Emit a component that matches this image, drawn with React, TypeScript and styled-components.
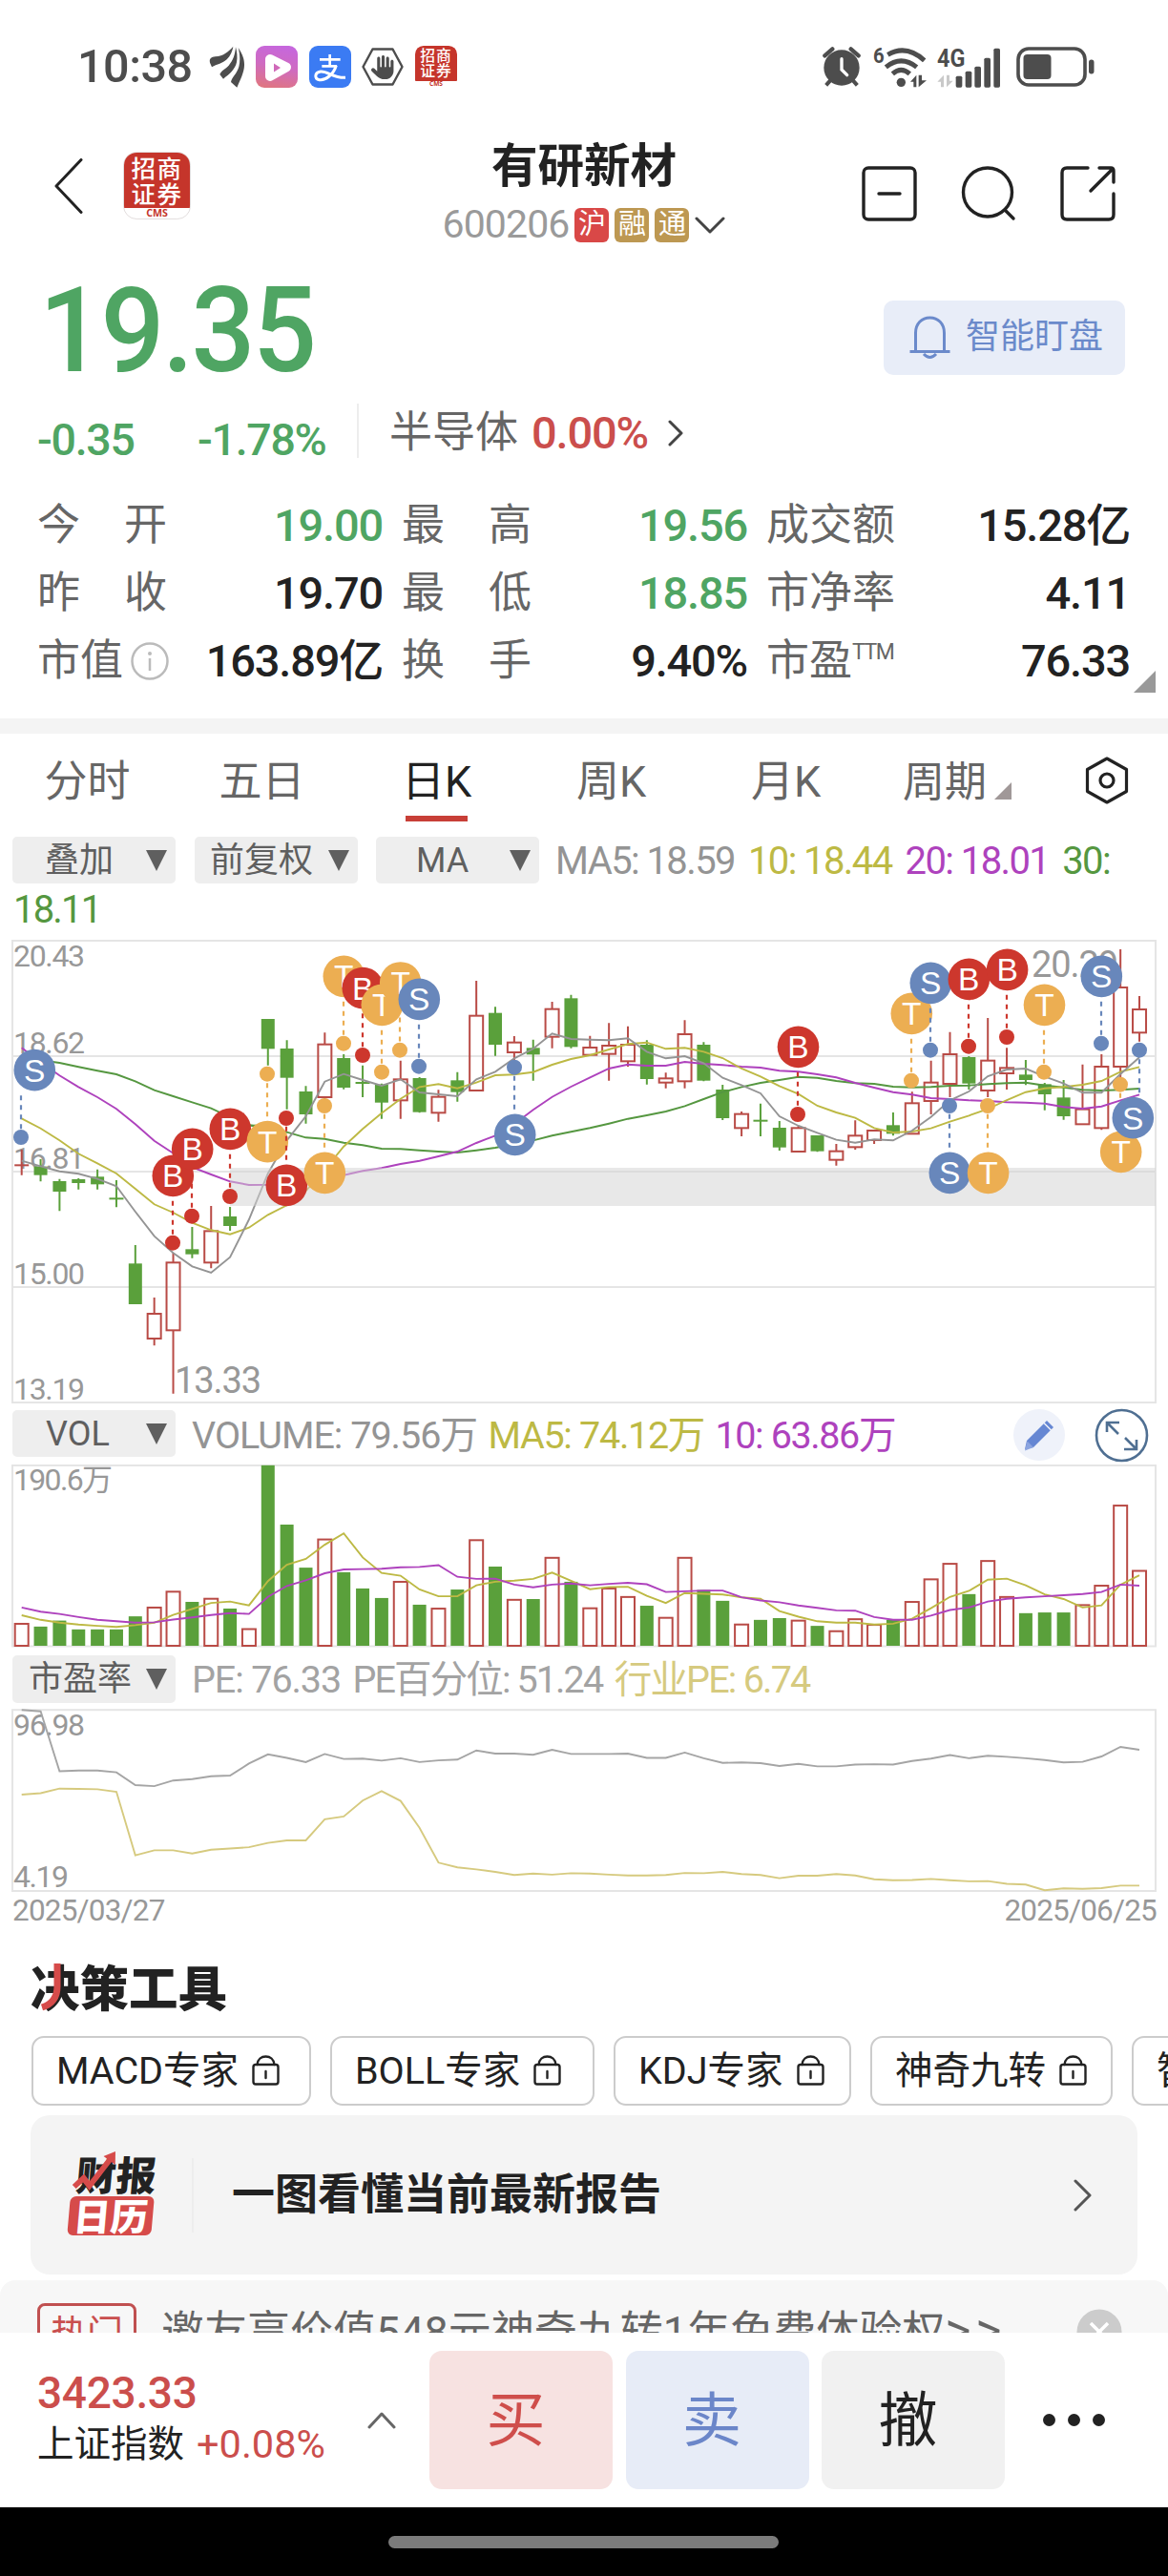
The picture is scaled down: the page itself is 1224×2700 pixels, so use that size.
import React from "react";
import styled, { createGlobalStyle } from "styled-components";
import { FaHand } from "react-icons/fa6";

const GREEN = "#4fa563";
const RED = "#cb4e4c";
const INK = "#222222";
const GRAY = "#666666";
const UP = "#b94b46";
const DOWN = "#5aa03b";
const MA_GRAY = "#949494";
const MA_YELLOW = "#bdb944";
const MA_PURPLE = "#ae42bd";
const MA_GREEN = "#559740";

const Global = createGlobalStyle`
  * { box-sizing: border-box; }
  html, body { margin: 0; padding: 0; background: #fff; }
  body { font-family: Roboto, "Noto Sans CJK SC", sans-serif; color: ${INK}; }
  svg { display: block; flex: none; }
`;

const Page = styled.div`
  width: 1224px;
  height: 2700px;
  overflow: hidden;
  background: #fff;
  display: flex;
  flex-direction: column;
  white-space: nowrap;
`;

type TextProps = { $size?: number; $color?: string; $weight?: number; $ls?: number };
const Text = styled.span<TextProps>`
  font-size: ${(p) => p.$size ?? 45}px;
  color: ${(p) => p.$color ?? INK};
  font-weight: ${(p) => p.$weight ?? 400};
  letter-spacing: ${(p) => p.$ls ?? 0}px;
  line-height: 1.1;
`;

/* ---------- status bar ---------- */
const StatusBar = styled.div`
  height: 140px;
  flex: none;
  display: flex;
  align-items: center;
  justify-content: space-between;
  padding: 0 77px 0 81px;
`;
const StatusLeft = styled.div`
  display: flex;
  align-items: center;
  gap: 11.600px;
`;
const Clock = styled(Text)`
  width: 126px;
`;
const StatusRight = styled.div`
  display: flex;
  align-items: center;
`;
const Gap = styled.div<{ $w: number }>`
  width: ${(p) => p.$w}px;
  flex: none;
`;

const AppMark = styled.div<{ $size: number }>`
  width: ${(p) => p.$size}px;
  height: ${(p) => p.$size}px;
  flex: none;
  border-radius: ${(p) => p.$size * 0.2}px;
  background: #fff;
  overflow: hidden;
  display: flex;
  flex-direction: column;
  border: ${(p) => (p.$size > 50 ? "1px solid #e3dede" : "0")};
`;
const MarkTop = styled.div<{ $size: number }>`
  height: 84%;
  background: #c5352b;
  color: #fff;
  font-family: "Noto Sans CJK SC", sans-serif;
  font-weight: 500;
  font-size: ${(p) => p.$size * 0.36}px;
  letter-spacing: ${(p) => p.$size * 0.02}px;
  line-height: 1.04;
  display: flex;
  flex-direction: column;
  align-items: center;
  justify-content: center;
`;
const MarkBottom = styled.div<{ $size: number }>`
  height: 16%;
  display: flex;
  align-items: center;
  justify-content: center;
  color: #c5352b;
  font-family: "Open Sans", sans-serif;
  font-weight: 700;
  font-size: ${(p) => p.$size * 0.15}px;
  line-height: 1;
`;
const BrandLogo = ({ size }: { size: number }) => (
  <AppMark $size={size}>
    <MarkTop $size={size}>
      <span>招商</span>
      <span>证券</span>
    </MarkTop>
    <MarkBottom $size={size}>CMS</MarkBottom>
  </AppMark>
);

const HandBadge = styled.div`
  width: 44px;
  height: 44px;
  display: grid;
  place-items: center;
  color: #4d4d4d;
  > * { grid-area: 1 / 1; }
`;

const WingIcon = () => (
  <svg width="38" height="44" viewBox="0 0 114 132">
    <g fill="#4d4d4d">
      <path d="M76 2C62 18 46 32 20 34C8 35 0 40 3 53L9 67C24 58 44 55 56 43C68 31 74 16 76 2Z" />
      <path d="M84 4C82 28 76 46 62 62C52 73 38 78 34 90L45 104C66 88 82 74 87 52C90 36 88 18 84 4Z" />
      <path d="M92 6C103 22 112 40 111 62C110 86 98 106 88 131L69 114C72 98 88 88 94 66C99 46 97 24 92 6Z" />
    </g>
  </svg>
);
const PlayIcon = () => (
  <svg width="44" height="44" viewBox="0 0 44 44">
    <defs>
      <linearGradient id="play" x1="0.6" y1="0" x2="0.4" y2="1">
        <stop offset="0" stopColor="#c667dd" />
        <stop offset="0.5" stopColor="#cf6bc0" />
        <stop offset="1" stopColor="#df7583" />
      </linearGradient>
    </defs>
    <rect width="44" height="44" rx="9" fill="url(#play)" />
    <path d="M15 14v18l17-9.500z" fill="none" stroke="#fff" strokeWidth="10" strokeLinejoin="round" />
    <path d="M19 18.500v9l7-4.500z" fill="#d069b9" />
  </svg>
);
const PayIcon = () => (
  <svg width="44" height="44" viewBox="0 0 132 132">
    <rect width="132" height="132" rx="27" fill="#3b7bf3" />
    <g fill="none" stroke="#fff" strokeWidth="8">
      <path d="M33 43H98M65 27V64M40 64H87" />
      <path d="M85 62C76 92 50 110 32 107C16 104 16 84 36 81C58 79 76 102 114 100" strokeWidth="9" />
    </g>
  </svg>
);
const AlarmIcon = () => (
  <svg width="40" height="42" viewBox="0 0 120 126">
    <circle cx="60" cy="66" r="56" fill="#4d4d4d" />
    <path d="M7 28L31 7M113 28L89 7" stroke="#4d4d4d" strokeWidth="13" strokeLinecap="round" />
    <path d="M27 103L11 121M93 103L109 121" stroke="#4d4d4d" strokeWidth="12" />
    <path d="M60 38V72L77 89" stroke="#fff" strokeWidth="10" fill="none" strokeLinecap="round" />
  </svg>
);
const WifiIcon = () => (
  <svg width="57" height="44" viewBox="0 0 171 132">
    <text x="0" y="53" fontSize="67" fontWeight="700" fill="#4d4d4d" fontFamily="Roboto" textLength="35" lengthAdjust="spacingAndGlyphs">6</text>
    <g fill="none" stroke="#4d4d4d" strokeWidth="15">
      <path d="M46 28Q104 -6 161 46" />
      <path d="M40 67Q88 28 137 67" />
      <path d="M61 88Q88 64 115 88" />
    </g>
    <circle cx="88" cy="115" r="14" fill="#4d4d4d" />
    <path d="M136 130V92L117 113H127V130ZM143 92V130L168 109H153V92Z" fill="#4d4d4d" />
  </svg>
);
const SignalIcon = () => (
  <svg width="67" height="44" viewBox="0 0 201 132">
    <text x="0" y="66" fontSize="76" fontWeight="700" fill="#4d4d4d" fontFamily="Roboto" textLength="88" lengthAdjust="spacingAndGlyphs">4G</text>
    <path d="M21 130V92L1 113H12V130ZM30 92V130L50 110H39V92Z" fill="#c9c9c9" />
    <g fill="#4d4d4d">
      <rect x="59" y="95" width="20" height="36" rx="5" />
      <rect x="89" y="80" width="20" height="51" rx="5" />
      <rect x="118" y="65" width="20" height="66" rx="5" />
      <rect x="148" y="38" width="20" height="93" rx="5" />
      <rect x="178" y="8" width="20" height="123" rx="5" />
    </g>
  </svg>
);
const BatteryIcon = () => (
  <svg width="82" height="42" viewBox="0 0 82 42">
    <rect x="2" y="2" width="70" height="38" rx="11" fill="none" stroke="#4d4d4d" strokeWidth="3.600" />
    <rect x="7.500" y="8" width="29" height="26" rx="4" fill="#4d4d4d" />
    <rect x="76" y="13.500" width="5.500" height="15" rx="2.700" fill="#4d4d4d" />
  </svg>
);

/* ---------- header ---------- */
const Header = styled.header`
  height: 140px;
  flex: none;
  display: grid;
  grid-template-columns: 400px 424px 400px;
`;
const HeaderSide = styled.div<{ $end?: boolean }>`
  display: flex;
  align-items: flex-start;
  justify-content: ${(p) => (p.$end ? "flex-end" : "flex-start")};
  padding: ${(p) => (p.$end ? "34px 55px 0 0" : "19px 0 0 57px")};
  gap: ${(p) => (p.$end ? 46 : 42)}px;
`;
const BackWrap = styled.div`
  padding-top: 7px;
`;
const TitleBlock = styled.div`
  display: flex;
  flex-direction: column;
  align-items: center;
  padding-top: 7px;
`;
const Title = styled(Text)`
  height: 56px;
  line-height: 56px;
`;
const CodeRow = styled.div`
  display: flex;
  align-items: center;
  height: 36px;
  margin-top: 15px;
  gap: 6px;
`;
const MarketTag = styled.span<{ $bg: string }>`
  width: 36px;
  height: 36px;
  border-radius: 6px;
  background: ${(p) => p.$bg};
  color: #fff;
  font-size: 29px;
  line-height: 35px;
  text-align: center;
`;

/* ---------- price ---------- */
const PriceRow = styled.section`
  height: 134px;
  flex: none;
  display: flex;
  align-items: center;
  justify-content: space-between;
  padding: 0 45px 0 41px;
`;
const Price = styled(Text)`
  line-height: 134px;
  transform: scaleX(0.95);
  transform-origin: left center;
`;
const WatchButton = styled.button`
  width: 253px;
  height: 78px;
  margin-top: 14px;
  border: 0;
  border-radius: 10px;
  background: #e8edf8;
  display: flex;
  align-items: center;
  justify-content: center;
  gap: 16px;
  padding: 0 0 0 4px;
  font-family: inherit;
`;
const ChangeRow = styled.section`
  height: 96px;
  flex: none;
  display: flex;
  align-items: flex-start;
  padding: 9px 0 0 39px;
`;
const Delta = styled(Text)<{ $width: number }>`
  width: ${(p) => p.$width}px;
  line-height: 57px;
  padding-top: 10px;
`;
const Divider = styled.div<{ $h: number }>`
  width: 2px;
  height: ${(p) => p.$h}px;
  background: #ededed;
  flex: none;
`;
const Sector = styled.div`
  display: flex;
  align-items: center;
  height: 61px;
  margin-left: 32px;
`;

const Stats = styled.section`
  position: relative;
  height: 243px;
  flex: none;
  padding: 5px 40px 0 39px;
  display: grid;
  grid-template-columns: 362px 362px 381px;
  column-gap: 20px;
  grid-template-rows: repeat(3, 71px);
`;
const Stat = styled.div`
  display: flex;
  align-items: center;
  justify-content: space-between;
`;
const StatLabel = styled.div<{ $spread?: boolean }>`
  width: 136px;
  display: flex;
  align-items: center;
  justify-content: ${(p) => (p.$spread ? "space-between" : "flex-start")};
  font-size: 45px;
  line-height: 60px;
  color: ${GRAY};
`;
const Ttm = styled.span`
  font-size: 23px;
  line-height: 24px;
  align-self: flex-start;
  padding-top: 9px;
  letter-spacing: -1.400px;
`;
const InfoDot = styled.span`
  margin-left: 8px;
  flex: none;
`;
const Corner = styled.i<{ $size: number; $color: string }>`
  display: block;
  width: 0;
  height: 0;
  border-left: ${(p) => p.$size}px solid transparent;
  border-bottom: ${(p) => p.$size}px solid ${(p) => p.$color};
`;
const StatsCorner = styled.div`
  position: absolute;
  right: 13px;
  top: 193px;
`;
const Band = styled.div`
  height: 16px;
  flex: none;
  background: #f4f4f4;
`;

/* ---------- tabs ---------- */
const Tabs = styled.nav`
  height: 101px;
  flex: none;
  display: grid;
  grid-template-columns: repeat(5, 183px) 1fr 110px;
`;
const Tab = styled.div<{ $active?: boolean }>`
  display: flex;
  flex-direction: column;
  align-items: center;
  font-size: 45px;
  line-height: 60px;
  padding-top: 21px;
  color: ${(p) => (p.$active ? INK : GRAY)};
`;
const TabLine = styled.div`
  width: 65px;
  height: 6px;
  margin-top: 5px;
  background: #c83f37;
`;
const PeriodTab = styled.div`
  display: flex;
  align-items: flex-end;
  gap: 8px;
  height: 81px;
  padding-left: 31px;
  font-size: 44px;
  line-height: 60px;
  color: ${GRAY};
  ${Corner} { margin-bottom: 12px; }
`;
const TabGear = styled.div`
  padding: 24px 0 0 23px;
`;

/* ---------- indicator rows ---------- */
const IndicatorRow = styled.div<{ $h: number; $pt: number }>`
  height: ${(p) => p.$h}px;
  flex: none;
  padding: ${(p) => p.$pt}px 0 0 13px;
  display: flex;
  align-items: flex-start;
`;
const Select = styled.div<{ $pad: number; $h: number; $mr: number }>`
  width: 171px;
  height: ${(p) => p.$h}px;
  margin-right: ${(p) => p.$mr}px;
  border-radius: 5px;
  background: #eeeeee;
  display: flex;
  align-items: center;
  justify-content: space-between;
  padding: 1px 9px 0 ${(p) => p.$pad}px;
  font-size: 36px;
  line-height: 1;
  color: #5f5f5f;
  flex: none;
`;
const Legend = styled.div<{ $h: number; $gap?: number }>`
  display: flex;
  align-items: center;
  height: ${(p) => p.$h}px;
  gap: ${(p) => p.$gap ?? 14}px;
`;
const LegendWrap = styled.div`
  height: 48px;
  flex: none;
  padding-left: 14px;
`;
const RowTools = styled.div`
  margin-left: auto;
  display: flex;
  gap: 30px;
  padding-right: 20px;
  margin-top: -2px;
`;
const DateRow = styled.div`
  height: 61px;
  flex: none;
  display: flex;
  justify-content: space-between;
  padding: 0 12px 0 13px;
`;

/* ---------- tools ---------- */
const SectionTitle = styled.div`
  position: relative;
  height: 87px;
  flex: none;
  padding-left: 32px;
  font-family: "Noto Sans CJK SC", sans-serif;
  font-weight: 900;
  font-size: 51.500px;
  line-height: 68px;
`;
const RedStroke = styled.svg`
  position: absolute;
  left: 20px;
  top: 0;
`;
const Chips = styled.div`
  height: 83px;
  flex: none;
  display: flex;
  gap: 20px;
  padding-left: 33px;
  overflow: hidden;
`;
const Chip = styled.div<{ $w: number }>`
  width: ${(p) => p.$w}px;
  height: 73px;
  flex: none;
  border: 2px solid #cccccc;
  border-radius: 13px;
  display: flex;
  align-items: center;
  gap: 14px;
  padding-left: 24px;
  font-size: 39.500px;
  line-height: 1;
  overflow: hidden;
`;
const ReportCard = styled.div`
  height: 167px;
  flex: none;
  margin: 0 32px;
  border-radius: 20px;
  background: #f4f4f4;
  display: flex;
  align-items: center;
  padding: 0 47px 0 42px;
`;
const ReportLogo = styled.div`
  width: 94px;
  display: flex;
  flex-direction: column;
  position: relative;
  font-family: "Noto Sans CJK SC", sans-serif;
  font-weight: 900;
  transform: skewX(-5deg);
`;
const LogoTop = styled.div`
  font-size: 42px;
  line-height: 40px;
  height: 42px;
  padding-left: 4px;
`;
const LogoBottom = styled.div`
  margin-top: 2px;
  width: 88px;
  height: 41px;
  border-radius: 6px;
  background: #d64b4a;
  color: #fff;
  font-size: 39px;
  line-height: 38px;
  text-align: center;
`;
const LogoArrow = styled.svg`
  position: absolute;
  left: 0;
  top: -3px;
`;
const ReportTitle = styled(Text)`
  flex: 1;
  padding-left: 40px;
`;
const HotBar = styled.div`
  height: 55px;
  flex: none;
  margin-top: 6px;
  border-radius: 16px 16px 0 0;
  background: #f7f7f7;
  overflow: hidden;
  display: flex;
  align-items: flex-start;
  padding: 24px 48px 0 39px;
`;
const HotTag = styled.div`
  width: 104px;
  height: 56px;
  flex: none;
  border: 3px solid #c05050;
  border-radius: 8px;
  color: #c94f4e;
  font-size: 38px;
  line-height: 58px;
  text-align: center;
`;
const HotText = styled.div`
  flex: 1;
  padding-left: 26px;
  font-size: 45px;
  line-height: 56px;
  color: ${GRAY};
`;
const CloseDot = styled.div`
  padding-top: 6px;
`;

/* ---------- footer ---------- */
const Footer = styled.footer`
  height: 183px;
  flex: none;
  display: flex;
  align-items: flex-start;
  padding: 19px 0 0 39px;
`;
const IndexBox = styled.div`
  width: 411px;
  display: flex;
  justify-content: space-between;
  align-items: center;
  padding-right: 35px;
  height: 145px;
`;
const IndexLines = styled.div`
  display: flex;
  flex-direction: column;
  gap: 5px;
  padding-bottom: 5px;
`;
const IndexName = styled.div`
  display: flex;
  align-items: center;
  gap: 13px;
`;
const Trade = styled.button<{ $bg: string; $fg: string }>`
  width: 192px;
  height: 145px;
  margin-right: 13.500px;
  flex: none;
  border: 0;
  border-radius: 13px;
  padding: 2px 11px 0 0;
  background: ${(p) => p.$bg};
  color: ${(p) => p.$fg};
  font-family: inherit;
  font-size: 62px;
  line-height: 1;
`;
const More = styled.div`
  height: 145px;
  display: flex;
  align-items: center;
  gap: 13px;
  padding-left: 26px;
`;
const Dot = styled.i`
  width: 13px;
  height: 13px;
  border-radius: 50%;
  background: ${INK};
`;
const HomeBar = styled.div`
  height: 72px;
  flex: none;
  background: #000;
  display: flex;
  justify-content: center;
  padding-top: 30px;
  padding-right: 2px;
`;
const Pill = styled.div`
  width: 409px;
  height: 13px;
  border-radius: 7px;
  background: #7b7b7b;
`;

/* ---------- chart data ---------- */
type Candle = [0 | 1, number, number, number, number];
const CANDLES: Candle[] = [
  [1, 705, 753, 755, 785], [0, 735, 758, 785, 805], [0, 797, 804, 837, 898], [0, 795, 798, 810, 830],
  [0, 767, 790, 814, 830], [0, 801, 857, 861, 886], [0, 1005, 1063, 1191, 1191], [1, 1170, 1221, 1299, 1321],
  [1, 1030, 1060, 1273, 1472], [0, 948, 1018, 1034, 1046], [1, 882, 961, 1060, 1078], [0, 885, 915, 945, 960],
  [0, 627, 627, 631, 631], [0, 294, 294, 388, 440], [0, 361, 387, 479, 578], [0, 505, 522, 594, 623],
  [1, 337, 374, 540, 545], [0, 405, 417, 510, 515], [0, 440, 493, 497, 540], [0, 497, 500, 557, 608],
  [1, 425, 484, 550, 608], [0, 477, 480, 587, 589], [1, 517, 539, 589, 617], [0, 461, 487, 524, 554],
  [1, 174, 284, 519, 521], [0, 256, 275, 375, 410], [1, 348, 368, 399, 430], [0, 359, 385, 406, 488],
  [1, 240, 263, 350, 386], [0, 218, 229, 382, 386], [1, 347, 384, 407, 409], [1, 307, 378, 404, 488],
  [1, 317, 375, 427, 444], [0, 361, 375, 483, 500], [1, 463, 481, 494, 512], [1, 298, 342, 490, 512],
  [0, 367, 375, 488, 490], [0, 501, 516, 606, 612], [1, 585, 593, 637, 663], [0, 560, 612, 616, 663],
  [0, 615, 636, 698, 708], [1, 630, 637, 711, 711], [0, 660, 660, 710, 712], [1, 687, 710, 737, 755],
  [1, 613, 661, 697, 705], [1, 645, 645, 675, 687], [0, 588, 628, 655, 661], [1, 523, 559, 655, 657],
  [1, 425, 494, 552, 594], [1, 335, 405, 498, 540], [0, 411, 414, 497, 516], [1, 291, 425, 519, 540],
  [1, 385, 448, 465, 516], [0, 423, 469, 486, 502], [0, 495, 499, 531, 581], [0, 486, 541, 600, 611],
  [1, 437, 578, 625, 627], [1, 405, 444, 637, 643], [1, 75, 195, 444, 485], [1, 222, 264, 337, 365],
];
const K_GRAY = [740,757,773,781,797,820,900,977,1030,1072,1092,1043,925,780,676,600,491,467,486,504,484,525,531,537,484,460,418,388,340,357,359,361,355,397,418,411,433,479,502,528,600,630,652,674,683,673,676,645,602,550,522,474,453,450,475,497,526,526,467,415];
const K_YELLOW = [607,638,676,718,748,780,828,877,903,935,958,971,950,910,880,835,768,695,640,590,545,508,499,512,494,471,469,461,438,420,408,390,373,368,388,385,397,417,450,475,505,530,567,588,605,637,651,648,638,617,598,577,549,524,512,508,501,489,460,445];
const K_PURPLE = [385,430,472,508,540,577,625,677,716,760,783,805,816,815,808,802,797,785,772,763,750,740,726,711,684,661,625,580,539,507,478,450,437,441,441,429,435,439,444,447,457,460,468,478,495,510,524,532,543,546,550,552,556,557,560,571,576,569,550,532];
const K_GREEN = [412,424,432,445,457,468,490,518,537,556,575,603,628,638,650,667,671,683,691,702,703,707,711,714,707,699,688,676,661,649,637,623,608,597,585,568,546,524,508,495,486,476,479,489,496,498,507,509,508,504,503,499,496,494,503,509,517,519,517,513];
const V_TOP = [652,662,645,670,670,670,633,606,561,592,581,611,667,205,373,495,413,508,554,581,533,600,609,557,415,492,584,584,465,535,608,552,576,603,635,465,558,589,654,643,638,643,660,673,639,655,643,590,526,482,570,474,576,624,622,622,599,544,317,502];
const V_UP = [0,7,8,10,12,16,20,22,24,26,28,30,31,32,34,35,38,41,43,44,45,47,48,49,51,52,56,57,58,59];
const V_YELLOW = [630,643,651,656,660,663,658,651,629,612,595,591,602,533,487,470,430,398,466,510,518,557,576,576,545,535,532,527,509,532,556,550,549,575,595,567,569,571,579,583,618,634,647,651,651,656,654,640,610,578,561,529,526,545,571,584,608,602,543,517];
const V_PURPLE = [608,620,626,635,643,647,651,650,642,636,629,624,626,578,547,531,511,500,499,498,494,493,488,521,527,526,543,551,543,540,545,541,538,542,564,562,560,560,579,588,593,602,609,616,617,635,643,643,631,615,608,591,583,579,576,573,570,564,543,546];
const P_GRAY = [898,902,1072,1070,1070,1075,1111,1114,1098,1094,1086,1084,1050,1024,1034,1046,1023,1037,1036,1042,1035,1046,1041,1039,1013,1022,1022,1025,1011,1023,1023,1023,1022,1034,1034,1019,1035,1048,1047,1049,1057,1051,1058,1058,1053,1052,1053,1043,1036,1026,1035,1028,1031,1035,1040,1047,1045,1030,1003,1011];
const P_YELLOW = [1138,1134,1121,1122,1123,1130,1310,1296,1296,1305,1294,1291,1287,1275,1268,1268,1208,1200,1155,1128,1156,1232,1331,1344,1350,1357,1366,1362,1365,1361,1362,1365,1367,1367,1366,1360,1361,1357,1363,1366,1375,1368,1368,1363,1367,1378,1381,1380,1377,1381,1384,1383,1391,1393,1409,1404,1405,1403,1396,1396];

type Mark = ["S" | "B" | "T", number, number, number, number];
const MARKS: Mark[] = [
  ["S", 36.3, 455, 22, 666], ["B", 181.3, 787, 181, 998], ["B", 201.7, 703, 201, 914], ["B", 241.3, 640, 241, 852],
  ["T", 280.3, 680, 280, 467], ["B", 300.3, 817, 300, 606], ["T", 340.3, 778, 340, 567], ["T", 360.3, 160, 360, 371],
  ["B", 380.3, 197, 380, 408], ["T", 400.3, 250, 400, 461], ["T", 419.7, 180, 419, 392], ["S", 439.3, 232, 439, 443],
  ["S", 539.7, 658, 539, 446], ["B", 836.5, 382, 836, 594], ["T", 955.3, 277, 955, 488], ["S", 975.3, 181, 975, 392],
  ["S", 995.3, 778, 995, 567], ["B", 1015.3, 169, 1015, 380], ["T", 1035.6, 778, 1035, 567], ["B", 1055.6, 139, 1055, 351],
  ["T", 1094.5, 250, 1094, 461], ["S", 1154.3, 160, 1154, 371], ["T", 1174.7, 712, 1174, 500], ["S", 1187.3, 605, 1194, 392],
];
const MARK_COLOR = { S: "#6887bb", B: "#cd372d", T: "#ecae52" };

const K_UNIT = 3;
const SUB_UNIT = 2.7034;
const xAt = (i: number) => 22.7 + i * 19.853;

const Line = ({ ys, base, unit, color }: { ys: number[]; base: number; unit: number; color: string }) => (
  <polyline
    points={ys.map((v, i) => `${xAt(i).toFixed(1)},${(base + v / unit).toFixed(1)}`).join(" ")}
    fill="none"
    stroke={color}
    strokeWidth="1.900"
  />
);
const AxisText = ({ x, y, size = 32, children, w }: { x: number; y: number; size?: number; children: string; w: number }) => (
  <text x={x} y={y} fontSize={size} fill="#989898" fontFamily='Roboto, "Noto Sans CJK SC", sans-serif' textLength={w}>
    {children}
  </text>
);

const KChart = () => {
  const base = -10;
  return (
    <svg width="1224" height="496" viewBox="0 0 1224 496">
      <g stroke="#e5e5e5" strokeWidth="2" fill="none">
        <rect x="13" y="6" width="1198" height="484" />
        <path d="M13 127H1211M13 248H1211M13 369H1211" />
      </g>
      <AxisText x={14} y={33} w={75}>20.43</AxisText>
      <AxisText x={14} y={124} w={75}>18.62</AxisText>
      <AxisText x={14} y={245} w={75}>16.81</AxisText>
      <AxisText x={14} y={366} w={75}>15.00</AxisText>
      <AxisText x={14} y={487} w={75}>13.19</AxisText>
      <AxisText x={183} y={479.5} size={38} w={91}>13.33</AxisText>
      <AxisText x={1081} y={43.5} size={38} w={91}>20.29</AxisText>
      {CANDLES.map(([up, hi, top, bot, lo], i) => {
        const x = xAt(i);
        const y = (v: number) => base + v / K_UNIT;
        const color = up ? UP : DOWN;
        const thin = bot - top <= 5;
        return (
          <g key={i} stroke={color} strokeWidth="2">
            <path d={`M${x} ${y(hi)}V${y(thin || !up ? lo : top)}M${x} ${y(bot)}V${y(lo)}`} />
            {thin ? (
              <path d={`M${x - 7.5} ${y((top + bot) / 2)}h15`} />
            ) : (
              <rect
                x={x - 7}
                y={y(top)}
                width="14"
                height={(bot - top) / K_UNIT}
                fill={up ? "none" : color}
                strokeWidth={up ? 2 : 0}
              />
            )}
          </g>
        );
      })}
      <Line ys={K_GREEN} base={base} unit={K_UNIT} color={MA_GREEN} />
      <Line ys={K_PURPLE} base={base} unit={K_UNIT} color={MA_PURPLE} />
      <Line ys={K_YELLOW} base={base} unit={K_UNIT} color={MA_YELLOW} />
      <Line ys={K_GRAY} base={base} unit={K_UNIT} color={MA_GRAY} />
      <rect x="241" y="244" width="970" height="40" fill="#d3d3d3" fillOpacity="0.520" />
      {MARKS.map(([kind, cx, cy, dx, dy], i) => {
        const y = base + cy / K_UNIT;
        const d = base + dy / K_UNIT;
        const dir = d > y ? 1 : -1;
        return (
          <g key={i}>
            <path d={`M${dx} ${y + dir * 22.5}V${d - dir * 8}`} stroke={MARK_COLOR[kind]} strokeWidth="2.200" strokeDasharray="5 5" strokeDashoffset="-4" />
            <circle cx={dx} cy={d} r="8" fill={MARK_COLOR[kind]} />
            <circle cx={cx} cy={y} r="21.800" fill={MARK_COLOR[kind]} />
            <text x={cx} y={y + 12} fontSize="33.500" fill="#fff" textAnchor="middle" fontFamily='"Liberation Sans", Roboto, sans-serif'>
              {kind}
            </text>
          </g>
        );
      })}
    </svg>
  );
};

const VolumeChart = () => {
  const base = -74;
  return (
    <svg width="1224" height="196" viewBox="0 0 1224 196">
      <rect x="13" y="2" width="1198" height="189.500" stroke="#e5e5e5" strokeWidth="2" fill="none" />
      <AxisText x={14} y={28} w={104}>190.6万</AxisText>
      {V_TOP.map((v, i) => {
        const up = V_UP.includes(i);
        const y = base + v / SUB_UNIT + (up ? 0.8 : 0);
        return (
          <rect
            key={i}
            x={xAt(i) - 7}
            y={y}
            width="14"
            height={191 - y}
            fill={up ? "#fff" : DOWN}
            stroke={up ? UP : "none"}
            strokeWidth="2"
          />
        );
      })}
      <Line ys={V_YELLOW} base={base} unit={SUB_UNIT} color={MA_YELLOW} />
      <Line ys={V_PURPLE} base={base} unit={SUB_UNIT} color={MA_PURPLE} />
    </svg>
  );
};

const PeChart = () => (
  <svg width="1224" height="196" viewBox="0 0 1224 196">
    <rect x="13" y="2.200" width="1198" height="189.800" fill="none" stroke="#e5e5e5" strokeWidth="2" />
    <AxisText x={14} y={28.8} w={75}>96.98</AxisText>
    <AxisText x={14} y={188} w={58}>4.19</AxisText>
    <Line ys={P_GRAY} base={-330} unit={SUB_UNIT} color="#a5a5a5" />
    <Line ys={P_YELLOW} base={-330} unit={SUB_UNIT} color="#d6ca7f" />
  </svg>
);

/* ---------- small icons ---------- */
const Caret = () => (
  <svg width="22" height="22" viewBox="0 0 22 22">
    <path d="M0 0H22L11 22Z" fill="#5f5f5f" />
  </svg>
);
const Chevron = ({ w, h, d, color = INK, sw = 3 }: { w: number; h: number; d: string; color?: string; sw?: number }) => (
  <svg width={w} height={h} viewBox={`0 0 ${w} ${h}`}>
    <path d={d} fill="none" stroke={color} strokeWidth={sw} strokeLinecap="round" strokeLinejoin="round" />
  </svg>
);
const Lock = () => (
  <svg width="30" height="34" viewBox="0 0 30 34">
    <g fill="none" stroke={INK} strokeWidth="2.400" strokeLinecap="round">
      <rect x="1.500" y="10" width="26" height="20.500" rx="2.500" />
      <path d="M5.500 10C6 4.500 10 1.500 14.500 1.500S23 4.500 23.500 10M14.500 17v7" />
    </g>
  </svg>
);

const STATS: Array<[React.ReactNode, boolean, string, string]> = [
  [<><span>今</span><span>开</span></>, true, "19.00", GREEN],
  [<><span>最</span><span>高</span></>, true, "19.56", GREEN],
  [<span>成交额</span>, false, "15.28亿", INK],
  [<><span>昨</span><span>收</span></>, true, "19.70", INK],
  [<><span>最</span><span>低</span></>, true, "18.85", GREEN],
  [<span>市净率</span>, false, "4.11", INK],
  [
    <>
      <span>市值</span>
      <InfoDot>
        <svg width="40" height="40" viewBox="0 0 40 40">
          <circle cx="20" cy="20" r="18.500" fill="none" stroke="#bbb" strokeWidth="2.500" />
          <path d="M20 17v13" stroke="#bbb" strokeWidth="2.500" />
          <circle cx="20" cy="12" r="2" fill="#bbb" />
        </svg>
      </InfoDot>
    </>,
    false, "163.89亿", INK,
  ],
  [<><span>换</span><span>手</span></>, true, "9.40%", INK],
  [<><span>市盈</span><Ttm>TTM</Ttm></>, false, "76.33", INK],
];

export default function App() {
  return (
    <Page>
      <Global />
      <StatusBar>
        <StatusLeft>
          <Clock $size={48.5} $color="#4d4d4d" $weight={500} $ls={-0.5}>10:38</Clock>
          <WingIcon />
          <PlayIcon />
          <PayIcon />
          <HandBadge>
            <svg width="44" height="44" viewBox="0 0 44 44">
              <path d="M11.500 3.500H32.500L42.500 22L32.500 40.500H11.500L1.500 22Z" fill="none" stroke="#4d4d4d" strokeWidth="2.400" strokeLinejoin="round" />
            </svg>
            <FaHand size={25} />
          </HandBadge>
          <BrandLogo size={44} />
        </StatusLeft>
        <StatusRight>
          <AlarmIcon />
          <Gap $w={13} />
          <WifiIcon />
          <Gap $w={10} />
          <SignalIcon />
          <Gap $w={16} />
          <BatteryIcon />
        </StatusRight>
      </StatusBar>

      <Header>
        <HeaderSide>
          <BackWrap>
            <Chevron w={30} h={58} d="M28 1.500L2 29L28 56.500" />
          </BackWrap>
          <BrandLogo size={71} />
        </HeaderSide>
        <TitleBlock>
          <Title $size={48.5} $weight={700}>有研新材</Title>
          <CodeRow>
            <Text $size={41} $color="#9a9a9a" $ls={-0.9}>600206</Text>
            <MarketTag $bg="#d94847">沪</MarketTag>
            <MarketTag $bg="#bd9852">融</MarketTag>
            <MarketTag $bg="#bd9852">通</MarketTag>
            <Chevron w={32} h={18} d="M2 2L16 16L30 2" color="#444" />
          </CodeRow>
        </TitleBlock>
        <HeaderSide $end>
          <svg width="58" height="58" viewBox="0 0 58 58" fill="none" stroke={INK} strokeWidth="3.400" strokeLinecap="round">
            <rect x="2" y="2" width="54" height="54" rx="5" />
            <path d="M18 29H40" />
          </svg>
          <svg width="58" height="58" viewBox="0 0 58 58" fill="none" stroke={INK} strokeWidth="3.400" strokeLinecap="round">
            <circle cx="28" cy="27.500" r="25.500" />
            <path d="M46 46L55 55" />
          </svg>
          <svg width="58" height="58" viewBox="0 0 58 58" fill="none" stroke={INK} strokeWidth="3.400" strokeLinecap="round">
            <path d="M29 2H7Q2 2 2 7V51Q2 56 7 56H51Q56 56 56 51V29" />
            <path d="M41 2H53Q56 2 56 5V17M54 4L32 26" />
          </svg>
        </HeaderSide>
      </Header>

      <PriceRow>
        <Price $size={124} $color={GREEN} $weight={500} $ls={-2.5}>19.35</Price>
        <WatchButton>
          <svg width="43" height="46" viewBox="0 0 43 46" fill="none" stroke="#6b8acb" strokeWidth="3">
            <path d="M6.500 37V18C6.500 8 13 2 21.500 2S36.500 8 36.500 18V37M0.500 37.500H42.500M15 40Q21.500 47 28 40" />
          </svg>
          <Text $size={36} $color="#6b8acb">智能盯盘</Text>
        </WatchButton>
      </PriceRow>

      <ChangeRow>
        <Delta $width={168} $size={46.5} $color={GREEN} $weight={500} $ls={-1.3}>-0.35</Delta>
        <Delta $width={167} $size={46.5} $color={GREEN} $weight={500} $ls={-1.3}>-1.78%</Delta>
        <Divider $h={57} />
        <Sector>
          <Text $size={45} $color={GRAY}>半导体</Text>
          <Gap $w={14} />
          <Text $size={47} $color={RED} $weight={500} $ls={-1.2}>0.00%</Text>
          <Gap $w={21} />
          <Chevron w={16} h={28} d="M2 2L14 14L2 26" color="#444" />
        </Sector>
      </ChangeRow>

      <Stats>
        {STATS.map(([label, spread, value, color], i) => (
          <Stat key={i}>
            <StatLabel $spread={spread}>{label}</StatLabel>
            <Text $size={47} $color={color} $weight={500} $ls={-1.2}>{value}</Text>
          </Stat>
        ))}
        <StatsCorner>
          <Corner $size={23} $color="#999" />
        </StatsCorner>
      </Stats>
      <Band />

      <Tabs>
        <Tab>分时</Tab>
        <Tab>五日</Tab>
        <Tab $active>
          日K
          <TabLine />
        </Tab>
        <Tab>周K</Tab>
        <Tab>月K</Tab>
        <PeriodTab>
          周期
          <Corner $size={18} $color="#a09898" />
        </PeriodTab>
        <TabGear>
          <svg width="46" height="50" viewBox="0 0 46 50" fill="none" stroke={INK} strokeWidth="3.200" strokeLinejoin="round">
            <path d="M23 2L43.500 13.500V36.500L23 48L2.500 36.500V13.500Z" />
            <circle cx="23" cy="25" r="7" />
          </svg>
        </TabGear>
      </Tabs>

      <IndicatorRow $h={62} $pt={7}>
        <Select $pad={34} $h={49} $mr={20}>叠加<Caret /></Select>
        <Select $pad={16} $h={49} $mr={19}>前复权<Caret /></Select>
        <Select $pad={42} $h={49} $mr={17}>MA<Caret /></Select>
        <Legend $h={51}>
          <Text $size={40} $color={MA_GRAY} $ls={-1.6}>MA5: 18.59</Text>
          <Text $size={40} $color={MA_YELLOW} $ls={-1.6}>10: 18.44</Text>
          <Text $size={40} $color={MA_PURPLE} $ls={-1.6}>20: 18.01</Text>
          <Text $size={40} $color={MA_GREEN} $ls={-1.6}>30:</Text>
        </Legend>
      </IndicatorRow>
      <LegendWrap>
        <Text $size={40} $color={MA_GREEN} $ls={-1.8}>18.11</Text>
      </LegendWrap>

      <KChart />

      <IndicatorRow $h={58} $pt={2}>
        <Select $pad={35} $h={49} $mr={17}>VOL<Caret /></Select>
        <Legend $h={53} $gap={11.5}>
          <Text $size={39.5} $color={MA_GRAY} $ls={-1}>VOLUME: 79.56万</Text>
          <Text $size={39.5} $color={MA_YELLOW} $ls={-1.3}>MA5: 74.12万</Text>
          <Text $size={39.5} $color={MA_PURPLE} $ls={-1.4}>10: 63.86万</Text>
        </Legend>
        <RowTools>
          <svg width="56" height="56" viewBox="0 0 56 56">
            <circle cx="28" cy="28" r="27" fill="#eff2fa" />
            <path d="M13 43L15 34L36 13L43 20L22 41Z" fill="#6687d3" />
            <path d="M13 44.500L15.500 34.500L22 41Z" fill="#8ba4e0" />
            <path d="M33 15.500L40.500 23" stroke="#eff2fa" strokeWidth="1.500" />
          </svg>
          <svg width="57" height="57" viewBox="0 0 57 57" fill="none" stroke="#4f6f92" strokeWidth="2.600">
            <circle cx="28.500" cy="28.500" r="26.500" />
            <path d="M13 25V15H26M13 15L25 27M44 33V43H31M44 43L32 31" />
          </svg>
        </RowTools>
      </IndicatorRow>

      <VolumeChart />

      <IndicatorRow $h={60} $pt={4.5}>
        <Select $pad={17} $h={50} $mr={17}>市盈率<Caret /></Select>
        <Legend $h={52} $gap={12.5}>
          <Text $size={39.5} $color="#a3a3a3" $ls={-1.1}>PE: 76.33</Text>
          <Text $size={39.5} $color="#a3a3a3" $ls={-1.9}>PE百分位: 51.24</Text>
          <Text $size={39.5} $color="#d6ca7f" $ls={-1.8}>行业PE: 6.74</Text>
        </Legend>
      </IndicatorRow>

      <PeChart />

      <DateRow>
        <Text $size={31.5} $color="#989898" $ls={-0.8}>2025/03/27</Text>
        <Text $size={31.5} $color="#989898" $ls={-0.8}>2025/06/25</Text>
      </DateRow>

      <SectionTitle>
        决策工具
        <RedStroke width="60" height="70" viewBox="0 0 60 70">
          <path d="M40 11V35Q40 52 24 57" fill="none" stroke="#d64b4a" strokeWidth="7" />
        </RedStroke>
      </SectionTitle>
      <Chips>
        <Chip $w={293}>MACD专家<Lock /></Chip>
        <Chip $w={277}>BOLL专家<Lock /></Chip>
        <Chip $w={249}>KDJ专家<Lock /></Chip>
        <Chip $w={254}>神奇九转<Lock /></Chip>
        <Chip $w={254}>智能</Chip>
      </Chips>
      <ReportCard>
        <ReportLogo>
          <LogoTop>财报</LogoTop>
          <LogoBottom>日历</LogoBottom>
          <LogoArrow width="50" height="42" viewBox="0 0 50 42">
            <path d="M3 37L12 28L19 36L39 7" fill="none" stroke="#d64b4a" strokeWidth="6" />
            <path d="M31 5L43 0L44 14Z" fill="#d64b4a" />
          </LogoArrow>
        </ReportLogo>
        <Gap $w={33} />
        <Divider $h={78} />
        <ReportTitle $size={45} $weight={700}>一图看懂当前最新报告</ReportTitle>
        <Chevron w={20} h={34} d="M2 2L17 17L2 32" color="#555" />
      </ReportCard>

      <HotBar>
        <HotTag>热门</HotTag>
        <HotText>
          邀友享价值548元神奇九转1年免费体验权
          <Text $size={52} $color={GRAY} $ls={5}>&gt;&gt;</Text>
        </HotText>
        <CloseDot>
          <svg width="48" height="48" viewBox="0 0 48 48">
            <circle cx="24" cy="24" r="23.500" fill="#cccccc" />
            <path d="M15 15L33 33M33 15L15 33" stroke="#fff" strokeWidth="3.500" />
          </svg>
        </CloseDot>
      </HotBar>

      <Footer>
        <IndexBox>
          <IndexLines>
            <Text $size={46} $color={RED} $weight={500} $ls={-0.3}>3423.33</Text>
            <IndexName>
              <Text $size={38.5}>上证指数</Text>
              <Text $size={41.5} $color={RED}>+0.08%</Text>
            </IndexName>
          </IndexLines>
          <Chevron w={30} h={18} d="M2 16L15 2L28 16" color="#666" />
        </IndexBox>
        <Trade $bg="#f7e2e1" $fg="#cf4e4b">买</Trade>
        <Trade $bg="#e7ecf7" $fg="#6b86c9">卖</Trade>
        <Trade $bg="#f1f1f1" $fg={INK}>撤</Trade>
        <More>
          <Dot />
          <Dot />
          <Dot />
        </More>
      </Footer>
      <HomeBar>
        <Pill />
      </HomeBar>
    </Page>
  );
}
